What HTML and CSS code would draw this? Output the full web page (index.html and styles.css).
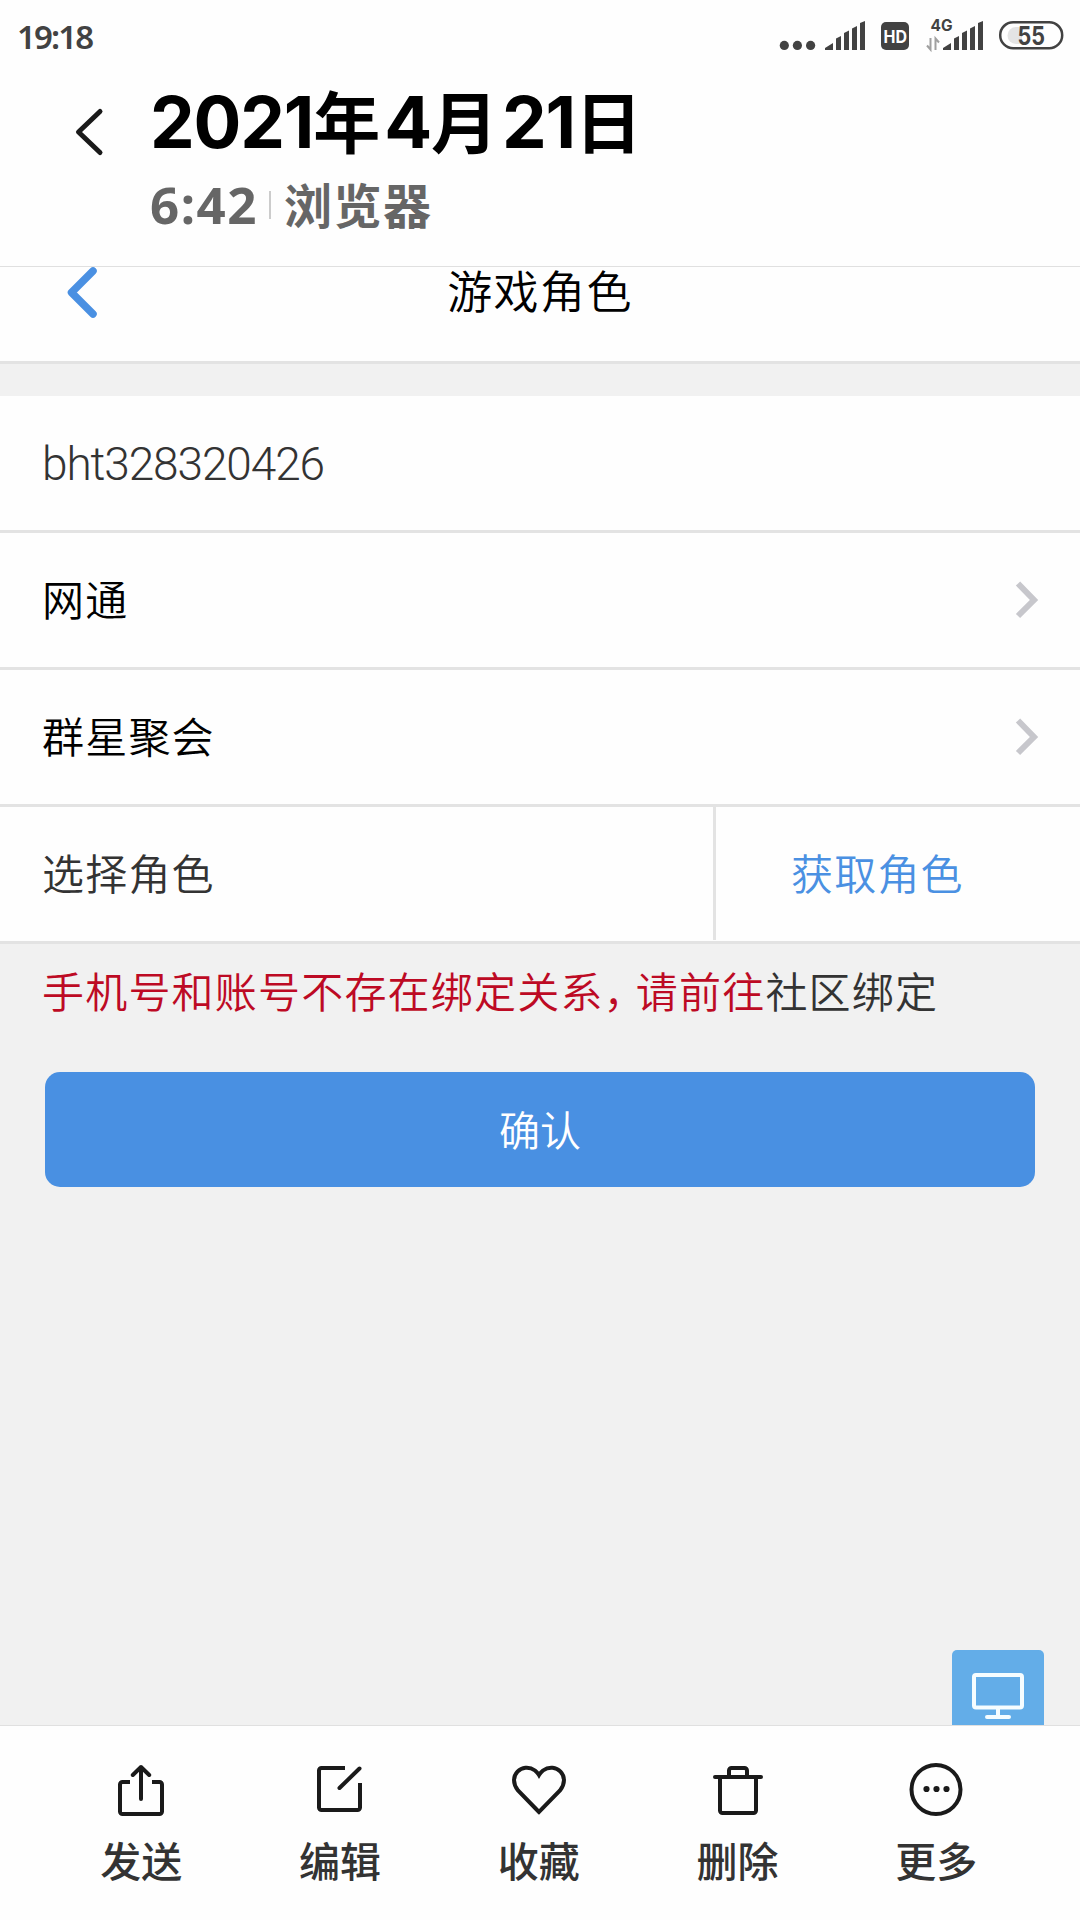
FILE: index.html
```html
<!DOCTYPE html>
<html lang="zh-CN">
<head>
<meta charset="utf-8">
<title>2021年4月21日</title>
<link rel="stylesheet" href="styles.css">
</head>
<body>
<div class="screen">
  <div class="status">
    <span class="clock">19:18</span>
    <svg class="status-icons" width="320" height="72" viewBox="760 0 320 72">
      <g fill="#424242">
        <circle cx="784.3" cy="45.4" r="4.6"/><circle cx="797.4" cy="45.4" r="4.6"/><circle cx="810.6" cy="45.4" r="4.6"/>
        <path id="bars" d="M825 50v-2l8-5v7zM836 50V38.500l5-2.500v14zM844 50V33l5-2.500V50zM852 50V28.500l5-2.500v24zM860 50V23l5-2v29z"/>
        <use href="#bars" x="118"/>
        <rect x="881" y="22" width="28" height="28" rx="5"/>
      </g>
      <text class="hd" x="883.500" y="42.500" textLength="23.500" lengthAdjust="spacingAndGlyphs">HD</text>
      <text class="net" x="930.500" y="31" textLength="22" lengthAdjust="spacingAndGlyphs">4G</text>
      <path d="M930.500 38v11.500L927 45.500M935.500 50V38.500l3.500 4" fill="none" stroke="#a0a0a0" stroke-width="2"/>
      <path d="M1016 27h6v17h-6a8.500 8.500 0 0 1 0-17z" fill="#e4e4e4"/>
      <rect x="1000.200" y="22.200" width="62" height="26" rx="13" fill="none" stroke="#424242" stroke-width="2.500"/>
      <text class="charge" x="1017.500" y="45" textLength="27.500" lengthAdjust="spacingAndGlyphs">55</text>
    </svg>
  </div>

  <header class="photo-head">
    <svg class="back" width="30" height="50" viewBox="74 107 30 50"><path d="M100 111.500 78.500 132 100 152.500" fill="none" stroke="#1a1a1a" stroke-width="5" stroke-linecap="round" stroke-linejoin="round"/></svg>
    <div class="photo-info">
      <h1 class="date"><span>2021</span>年<span>4</span>月<span>21</span>日</h1>
      <p class="meta"><span class="time">6:42</span><i class="sep"></i><span class="source">浏览器</span></p>
    </div>
  </header>

  <main class="photo">
    <div class="bar">
      <svg class="bar-back" width="34" height="56" viewBox="64 264 34 56"><path d="M93 271 71.500 292.500 93 314" fill="none" stroke="#4a90e2" stroke-width="7.500" stroke-linecap="round" stroke-linejoin="round"/></svg>
      <h2 class="bar-title">游戏角色</h2>
    </div>
    <div class="form">
      <div class="row account">bht328320426</div>
      <div class="row picked">网通<svg class="arrow" width="26" height="40" viewBox="0 0 26 40"><path d="M4 3.500 20 20 4 36" fill="none" stroke="#c7c7cc" stroke-width="6"/></svg></div>
      <div class="row picked">群星聚会<svg class="arrow" width="26" height="40" viewBox="0 0 26 40"><path d="M4 3.500 20 20 4 36" fill="none" stroke="#c7c7cc" stroke-width="6"/></svg></div>
      <div class="row role"><span class="role-name">选择角色</span><a class="fetch">获取角色</a></div>
    </div>
    <p class="error">手机号和账号不存在绑定关系<span class="comma">，</span>请前往<a class="link">社区绑定</a></p>
    <button class="confirm">确认</button>
    <div class="desktop">
      <svg width="92" height="75" viewBox="952 1650 92 75" fill="none" stroke="#f6fdff" stroke-width="4" stroke-linecap="round"><rect x="974" y="1675" width="48" height="32.500" rx="2"/><path d="M998 1708v8M987 1717h22"/></svg>
    </div>
  </main>

  <nav class="actions">
    <div class="action"><svg viewBox="111 1760 60 60"><path d="M130 1782h-7.500a2.500 2.500 0 0 0-2.500 2.500v27a2.500 2.500 0 0 0 2.500 2.500h37a2.500 2.500 0 0 0 2.500-2.500v-27a2.500 2.500 0 0 0-2.500-2.500H152"/><path class="round" d="M141 1799v-32M132.800 1775l8.200-8 8.200 8"/></svg>发送</div>
    <div class="action"><svg viewBox="310 1760 60 60"><path d="M345 1768h-23.500a2.500 2.500 0 0 0-2.500 2.500v37a2.500 2.500 0 0 0 2.500 2.500h36a2.500 2.500 0 0 0 2.500-2.500V1783"/><path class="round" d="m339.500 1788 20-19.500"/></svg>编辑</div>
    <div class="action"><svg viewBox="508.500 1760 60 60"><path d="M538.500 1812 517.500 1790.500C506 1776 522 1761.500 534.500 1770.500Q537 1772.500 538.500 1775Q540 1772.500 542.500 1770.500C555 1761.500 571 1776 559.500 1790.500Z"/></svg>收藏</div>
    <div class="action"><svg viewBox="708 1760 60 60"><path class="round" d="M715 1777h46"/><path d="M729 1777v-6.500a2.500 2.500 0 0 1 2.500-2.500h13a2.500 2.500 0 0 1 2.500 2.500v6.500M720 1777v33.500a2.500 2.500 0 0 0 2.500 2.500h31a2.500 2.500 0 0 0 2.500-2.500V1777"/></svg>删除</div>
    <div class="action"><svg viewBox="906.500 1760 60 60"><circle cx="936.500" cy="1789.500" r="24.500"/><g class="dots"><circle cx="927" cy="1789" r="3.100"/><circle cx="937" cy="1789" r="3.100"/><circle cx="947" cy="1789" r="3.100"/></g></svg>更多</div>
  </nav>
</div>
</body>
</html>
```
FILE: styles.css
```css
* { box-sizing: border-box; }

body {
  margin: 0;
  background: #fefefe;
  font-family: "Noto Sans CJK SC", sans-serif;
}

h1, h2, p { margin: 0; }

.screen {
  width: 1080px;
  height: 1920px;
  display: flex;
  flex-direction: column;
  overflow: hidden;
}

/* system status bar */
.status {
  height: 72px;
  display: flex;
  justify-content: space-between;
  padding-left: 17px;
  color: #424242;
}
.clock {
  font: 600 33px/73px "Noto Sans", sans-serif;
  letter-spacing: -1.9px;
}
.hd, .net, .charge { font-family: "Inter", sans-serif; font-weight: 700; }
.hd { font-size: 17px; fill: #fff; }
.net { font-size: 15.5px; fill: #424242; }
.charge { font-size: 26px; fill: #424242; }

/* photo date and source */
.photo-head {
  height: 195px;
  display: flex;
  padding: 0 74px;
  border-bottom: 1px solid #e0e0e0;
}
.back { margin-top: 35px; }
.photo-info { padding-left: 46px; }
.date {
  height: 100px;
  font-family: "Inter", "Noto Sans CJK SC", sans-serif;
  font-size: 67px;
  line-height: 100px;
  font-weight: 700;
  letter-spacing: 4px;
  white-space: nowrap;
  color: #000;
}
.date span { font-size: 71px; letter-spacing: -1.2px; }
.meta {
  height: 68px;
  display: flex;
  align-items: flex-start;
  font-size: 48px;
  font-weight: 700;
  line-height: 64px;
  color: #666;
}
.time {
  width: 119px;
  font-family: "Noto Sans", sans-serif;
  font-size: 51px;
  letter-spacing: 1.5px;
}
.sep {
  width: 2px;
  height: 28px;
  margin: 19px 13px 0 0;
  background: #ccc;
}
.source { line-height: 63px; letter-spacing: 1.5px; }

/* captured page */
.photo {
  height: 1458px;
  display: flex;
  flex-direction: column;
  position: relative;
  background: #f1f1f1;
}
.bar {
  height: 97px;
  display: grid;
  grid-template-columns: 64px 34px 1fr 98px;
  background: #fefefe;
  border-bottom: 3px solid #e3e3e3;
}
.bar-back { grid-column: 2; margin-top: -3px; }
.bar-title {
  font-size: 45px;
  font-weight: 350;
  line-height: 45px;
  letter-spacing: 1.4px;
  text-align: center;
  color: #000;
}
.form { margin-top: 32px; }
.row {
  height: 137px;
  display: flex;
  align-items: flex-start;
  justify-content: space-between;
  padding: 0 40px 0 42px;
  background: #fefefe;
  border-bottom: 3px solid #e3e3e3;
  font-size: 42px;
  font-weight: 350;
  line-height: 129px;
  letter-spacing: 1.2px;
  color: #333;
}
.account {
  padding-left: 42px;
  font-family: "Roboto", sans-serif;
  font-size: 46px;
  font-weight: 300;
  line-height: 137px;
  letter-spacing: -1.1px;
}
.picked { color: #000; }
.arrow { margin-top: 47px; }
.role { padding-right: 0; }
.fetch {
  width: 367px;
  height: 133px;
  padding-left: 75px;
  border-left: 3px solid #e3e3e3;
  color: #4a90e2;
}
.error {
  margin: 15px 0 0 42px;
  font-size: 42px;
  font-weight: 350;
  line-height: 62px;
  letter-spacing: 1.2px;
  color: #bd0a24;
}
.comma { margin-right: 10px; font-feature-settings: "halt"; }
.link { color: #333; }
.confirm {
  width: 990px;
  height: 115px;
  margin: 51px 45px 0;
  padding: 0 0 2px;
  border: 0;
  border-radius: 15px;
  background: #4990e2;
  color: #fff;
  font: 350 41px/111px "Noto Sans CJK SC", sans-serif;
}
.desktop {
  position: absolute;
  right: 36px;
  bottom: 0;
  height: 75px;
  border-radius: 5px 5px 0 0;
  background: #63ade8;
}

/* photo actions */
.actions {
  flex: 1;
  display: grid;
  grid-template-columns: repeat(5, 198.8px);
  justify-content: center;
  padding-right: 2.5px;
  border-top: 1px solid #e0e0e0;
  background: #fefefe;
}
.action {
  display: flex;
  flex-direction: column;
  align-items: center;
  padding-top: 34px;
  font-size: 41px;
  font-weight: 500;
  line-height: 79px;
  color: #333;
}
.action svg {
  width: 60px;
  height: 60px;
  fill: none;
  stroke: #1a1a1a;
  stroke-width: 4;
}
.round { stroke-linecap: round; stroke-linejoin: round; }
.dots { fill: #1a1a1a; stroke: none; }
```
